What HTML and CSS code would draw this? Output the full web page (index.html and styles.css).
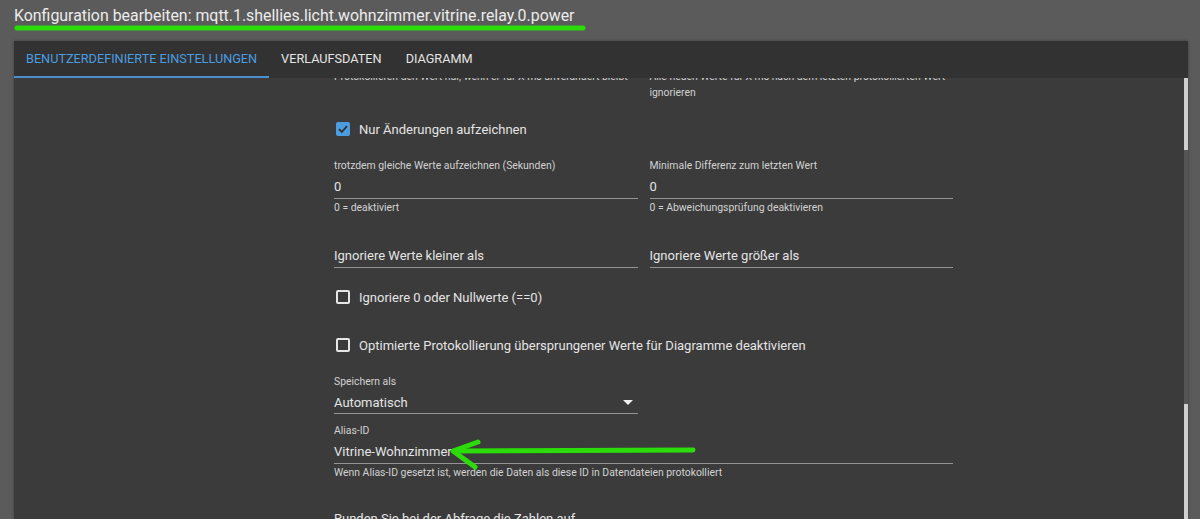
FILE: index.html
```html
<!DOCTYPE html>
<html lang="de">
<head>
    <meta charset="UTF-8">
    <title>Konfiguration bearbeiten</title>
    <link rel="stylesheet" href="styles.css">
</head>
<body>
<div class="title">Konfiguration bearbeiten: mqtt.1.shellies.licht.wohnzimmer.vitrine.relay.0.power</div>

<div class="panel">
    <div class="tabs">
        <div class="tab active">Benutzerdefinierte Einstellungen</div>
        <div class="tab">Verlaufsdaten</div>
        <div class="tab">Diagramm</div>
    </div>

    <div class="body">
        <div class="content">
            <div class="form">
                <!-- erste Zeile ist schon halb weggescrollt -->
                <div class="row row-cut">
                    <div class="col helper">Protokollieren den Wert nur, wenn er für X ms unverändert bleibt</div>
                    <div class="col helper">Alle neuen Werte für X ms nach dem letzten protokollierten Wert ignorieren</div>
                </div>

                <div class="check row-check1">
                    <span class="box checked">
                        <svg width="14" height="14" viewBox="0 0 14 14"><path d="M3 7.2 L5.8 10 L11 4.2" fill="none" stroke="#2f2f2f" stroke-width="1.8"/></svg>
                    </span>
                    <span>Nur Änderungen aufzeichnen</span>
                </div>

                <div class="row row-fields1">
                    <div class="col field">
                        <div class="label">trotzdem gleiche Werte aufzeichnen (Sekunden)</div>
                        <div class="input">0</div>
                        <div class="helper">0 = deaktiviert</div>
                    </div>
                    <div class="col field">
                        <div class="label">Minimale Differenz zum letzten Wert</div>
                        <div class="input">0</div>
                        <div class="helper">0 = Abweichungsprüfung deaktivieren</div>
                    </div>
                </div>

                <div class="row row-fields2">
                    <div class="col field">
                        <div class="input">Ignoriere Werte kleiner als</div>
                    </div>
                    <div class="col field">
                        <div class="input">Ignoriere Werte größer als</div>
                    </div>
                </div>

                <div class="check row-check2">
                    <span class="box"></span>
                    <span>Ignoriere 0 oder Nullwerte (==0)</span>
                </div>

                <div class="check row-check3">
                    <span class="box"></span>
                    <span>Optimierte Protokollierung übersprungener Werte für Diagramme deaktivieren</span>
                </div>

                <div class="field select-field">
                    <div class="label">Speichern als</div>
                    <div class="input select">Automatisch<span class="caret"></span></div>
                </div>

                <div class="field alias-field">
                    <div class="label">Alias-ID</div>
                    <div class="input">Vitrine-Wohnzimmer</div>
                    <div class="helper">Wenn Alias-ID gesetzt ist, werden die Daten als diese ID in Datendateien protokolliert</div>
                </div>

                <div class="round-label">Runden Sie bei der Abfrage die Zahlen auf</div>
            </div>
        </div>
        <div class="scrollbar">
            <div class="thumb thumb-top"></div>
            <div class="thumb thumb-bottom"></div>
        </div>
    </div>
</div>

<!-- grüne Markierungen über dem Screenshot -->
<svg class="marks" width="1200" height="519" viewBox="0 0 1200 519">
    <g stroke="#2bdc0a" stroke-width="5" stroke-linecap="round" fill="none">
        <line x1="17" y1="28" x2="583" y2="28"/>
        <line x1="454" y1="451" x2="693" y2="450"/>
        <path d="M478 442 L453 451 L475 467" stroke-linejoin="round"/>
    </g>
</svg>
</body>
</html>
```

FILE: styles.css
```css
body {
    margin: 0;
    width: 1200px;
    height: 519px;
    overflow: hidden;
    background: #5b5b5b;
    font-family: Roboto, "Noto Sans", sans-serif;
    color: #e2e2e2;
    position: relative;
}

.title {
    height: 41px;
    padding-left: 14px;
    box-sizing: border-box;
    font-size: 15.9px;
    line-height: 32px;
    color: #ececec;
}

.panel {
    margin-left: 14px;
    width: 1174px;
    height: 478px;
    background: #3b3b3b;
    display: flex;
    flex-direction: column;
    box-shadow: 0 0 3px rgba(0, 0, 0, 0.3);
}

.tabs {
    height: 37px;
    background: #323232;
    display: flex;
    flex-shrink: 0;
}

.tab {
    padding: 0 12px;
    font-size: 12.7px;
    line-height: 35px;
    text-transform: uppercase;
    color: #e4e4e4;
    border-bottom: 2px solid transparent;
}

.tab.active {
    color: #4b9de0;
    border-bottom-color: #4a8fce;
}

.body {
    flex: 1;
    display: flex;
    min-height: 0;
}

.content {
    flex: 1;
    overflow: hidden;
}

.form {
    width: 619px;
    padding-left: 320px;
}

.row {
    display: flex;
    gap: 12px;
}

.col {
    flex: 1;
}

.helper {
    font-size: 10.4px;
    line-height: 16px;
    color: #d2d2d2;
}

.row-cut {
    margin-top: -9px;
}

.check {
    display: flex;
    align-items: center;
    height: 24px;
    font-size: 13px;
    color: #e4e4e4;
}

.box {
    width: 14px;
    height: 14px;
    margin: 0 9px 0 2px;
    box-sizing: border-box;
    border: 2px solid #e6e6e6;
    border-radius: 2px;
    display: flex;
}

.box.checked {
    border: none;
    background: #4b9de0;
}

.row-check1 { margin-top: 16px; }
.row-fields1 { margin-top: 18px; }
.row-fields2 { margin-top: 27px; }
.row-check2 { margin-top: 17px; }
.row-check3 { margin-top: 24px; }
.select-field { margin-top: 18px; }
.alias-field { margin-top: 10px; }

.field .label {
    font-size: 10.4px;
    line-height: 14px;
    color: #d2d2d2;
}

.input {
    height: 25px;
    line-height: 27px;
    font-size: 13px;
    color: #e4e4e4;
    border-bottom: 1px solid #949494;
}

.field .helper {
    margin-top: 2px;
    line-height: 14px;
}

.select-field {
    width: 304px;
}

.select {
    display: flex;
    justify-content: space-between;
    align-items: center;
    line-height: normal;
    padding-top: 2px;
    box-sizing: border-box;
}

.caret {
    width: 0;
    height: 0;
    margin-right: 5px;
    border-left: 5px solid transparent;
    border-right: 5px solid transparent;
    border-top: 5px solid #f0f0f0;
}

.round-label {
    margin-top: 29px;
    font-size: 13px;
    line-height: 20px;
    color: #e4e4e4;
}

.scrollbar {
    width: 4px;
    background: #555555;
    display: flex;
    flex-direction: column;
    justify-content: space-between;
}

.thumb {
    background: #cfcfcf;
}

.thumb-top { height: 72px; }
.thumb-bottom { height: 115px; }

.marks {
    position: absolute;
    left: 0;
    top: 0;
    pointer-events: none;
}
```
